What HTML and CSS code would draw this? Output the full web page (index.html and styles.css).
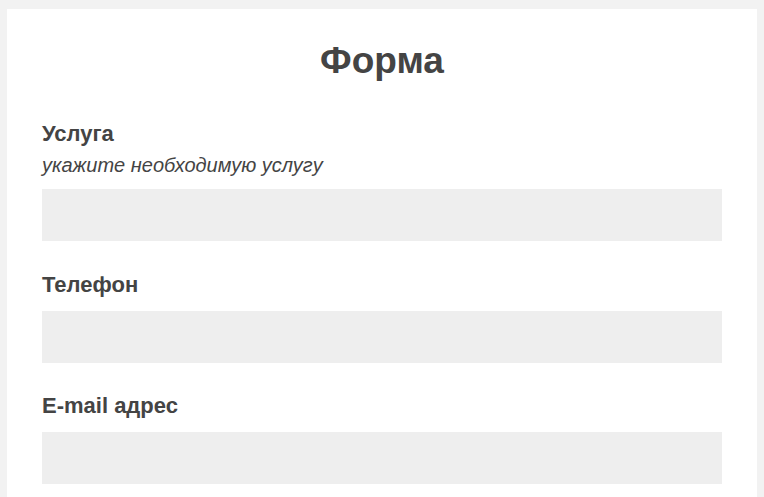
FILE: index.html
```html
<!DOCTYPE html>
<html lang="ru">
<head>
<meta charset="utf-8">
<title>Форма</title>
<link rel="stylesheet" href="styles.css">
</head>
<body>
<div class="card">
  <h1 class="title">Форма</h1>
  <div class="field">
    <label class="label" for="service">Услуга</label>
    <div class="hint">укажите необходимую услугу</div>
    <input class="input" id="service" type="text">
  </div>
  <div class="field">
    <label class="label" for="phone">Телефон</label>
    <input class="input" id="phone" type="text">
  </div>
  <div class="field">
    <label class="label" for="email">E-mail адрес</label>
    <input class="input" id="email" type="text">
  </div>
</div>
</body>
</html>
```

FILE: styles.css
```css
html, body {
  margin: 0;
  background: #f2f2f2;
}
body {
  padding: 9px 7px 0;
  font-family: "Liberation Sans", Arial, sans-serif;
  color: #444;
}
.card {
  background: #fff;
  padding: 31px 35px 20px;
}
.title {
  margin: 0 0 39px;
  font-size: 37px;
  line-height: 42px;
  font-weight: bold;
  text-align: center;
}
.field {
  margin-bottom: 30.5px;
}
.label {
  display: block;
  font-size: 22px;
  line-height: 26px;
  font-weight: bold;
}
.hint {
  margin-top: 7px;
  font-size: 20px;
  line-height: 22px;
  font-style: italic;
}
.input {
  display: block;
  box-sizing: border-box;
  width: 100%;
  height: 52px;
  margin-top: 13px;
  border: none;
  background: #eee;
  padding: 0 10px;
  font: inherit;
  outline: none;
}
```
